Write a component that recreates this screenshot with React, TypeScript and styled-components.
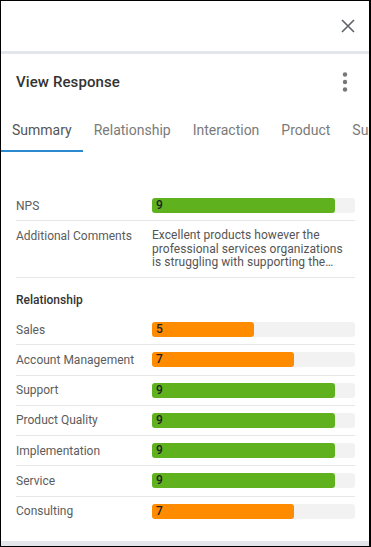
import React from "react";
import styled, { createGlobalStyle } from "styled-components";

interface ScoreItem {
  label: string;
  value: number;
}

const relationship: ScoreItem[] = [
  { label: "Sales", value: 5 },
  { label: "Account Management", value: 7 },
  { label: "Support", value: 9 },
  { label: "Product Quality", value: 9 },
  { label: "Implementation", value: 9 },
  { label: "Service", value: 9 },
  { label: "Consulting", value: 7 },
];

const tabs = ["Summary", "Relationship", "Interaction", "Product", "Support"];

function ScoreBar({ value }: { value: number }) {
  return (
    <Track>
      <Fill $tone={value >= 9 ? "good" : "mid"} style={{ width: `${value * 10}%` }}>
        {value}
      </Fill>
    </Track>
  );
}

export default function App() {
  return (
    <>
      <GlobalStyle />
      <Frame>
        <TopBar>
          <IconButton aria-label="Close">
            <svg width="14" height="14" viewBox="0 0 14 14">
              <path d="M1 1 L13 13 M13 1 L1 13" stroke="#5f6368" strokeWidth="1.6" />
            </svg>
          </IconButton>
        </TopBar>
        <Header>
          <Title>View Response</Title>
          <IconButton aria-label="More">
            <svg width="6" height="20" viewBox="0 0 6 20">
              <circle cx="3" cy="2.5" r="2.2" fill="#777" />
              <circle cx="3" cy="10" r="2.2" fill="#777" />
              <circle cx="3" cy="17.5" r="2.2" fill="#777" />
            </svg>
          </IconButton>
        </Header>
        <TabBar>
          {tabs.map((t, i) => (
            <Tab key={t} $active={i === 0}>
              {t}
            </Tab>
          ))}
        </TabBar>
        <Content>
          <Row>
            <Label>NPS</Label>
            <ScoreBar value={9} />
          </Row>
          <Row $top>
            <Label>Additional Comments</Label>
            <Comment>
              Excellent products however the professional services organizations is
              struggling with supporting the breadth of our rollout across regions.
            </Comment>
          </Row>
          <SectionTitle>Relationship</SectionTitle>
          {relationship.map((item, i) => (
            <Row key={item.label} $last={i === relationship.length - 1}>
              <Label>{item.label}</Label>
              <ScoreBar value={item.value} />
            </Row>
          ))}
        </Content>
        <Footer />
      </Frame>
    </>
  );
}

const GlobalStyle = createGlobalStyle`
  body {
    margin: 0;
    font-family: Roboto, "Liberation Sans", sans-serif;
    background: #fff;
  }
`;

const Frame = styled.div`
  width: 371px;
  height: 547px;
  box-sizing: border-box;
  border: 1px solid #000;
  border-right-width: 2px;
  display: flex;
  flex-direction: column;
  background: #fff;
  overflow: hidden;
`;

const TopBar = styled.div`
  height: 50px;
  display: flex;
  justify-content: flex-end;
  align-items: center;
  padding-right: 14px;
  border-bottom: 3px solid #e3e6ea;
  flex-shrink: 0;
`;

const IconButton = styled.button`
  border: none;
  background: none;
  padding: 0;
  display: flex;
  align-items: center;
  justify-content: center;
  cursor: pointer;
`;

const Header = styled.div`
  height: 56px;
  display: flex;
  align-items: center;
  justify-content: space-between;
  padding: 0 21px 0 15px;
  flex-shrink: 0;
`;

const Title = styled.h2`
  margin: 0;
  font-size: 15px;
  font-weight: 500;
  color: #333;
  letter-spacing: 0.1px;
`;

const TabBar = styled.div`
  display: flex;
  height: 42px;
  white-space: nowrap;
  flex-shrink: 0;
`;

const Tab = styled.div<{ $active?: boolean }>`
  padding: 0 11px;
  display: flex;
  align-items: center;
  font-size: 14px;
  color: ${(p) => (p.$active ? "#555" : "#7a7a7a")};
  border-bottom: 2px solid ${(p) => (p.$active ? "#2b89cf" : "transparent")};
`;

const Content = styled.div`
  flex: 1;
  padding: 39px 14px 0 15px;
`;

const Row = styled.div<{ $top?: boolean; $last?: boolean }>`
  display: grid;
  grid-template-columns: 136px 1fr;
  align-items: ${(p) => (p.$top ? "start" : "center")};
  min-height: 29.25px;
  padding: ${(p) => (p.$top ? "8px 0 7px" : "0")};
  border-bottom: 1px solid ${(p) => (p.$last ? "transparent" : "#e7e7e7")};
`;

const Label = styled.div`
  font-size: 12px;
  color: #5c5c5c;
  line-height: 14px;
`;

const Comment = styled.div`
  font-size: 12px;
  line-height: 13.6px;
  color: #555;
  letter-spacing: 0.05px;
  padding-right: 2px;
  display: -webkit-box;
  -webkit-line-clamp: 3;
  -webkit-box-orient: vertical;
  overflow: hidden;
`;

const SectionTitle = styled.div`
  font-size: 12px;
  font-weight: 500;
  color: #333;
  line-height: 14px;
  padding: 15px 0 8px;
`;

const Track = styled.div`
  height: 15px;
  background: #f2f2f2;
  border-radius: 3px;
`;

const Fill = styled.div<{ $tone: "good" | "mid" }>`
  height: 100%;
  box-sizing: border-box;
  border-radius: 3px;
  background: ${(p) => (p.$tone === "good" ? "#5fb21e" : "#ff8b00")};
  font-size: 12px;
  font-weight: 500;
  color: #222;
  line-height: 15px;
  padding-left: 4px;
`;

const Footer = styled.div`
  height: 5px;
  background: #e3e6ea;
  flex-shrink: 0;
`;
